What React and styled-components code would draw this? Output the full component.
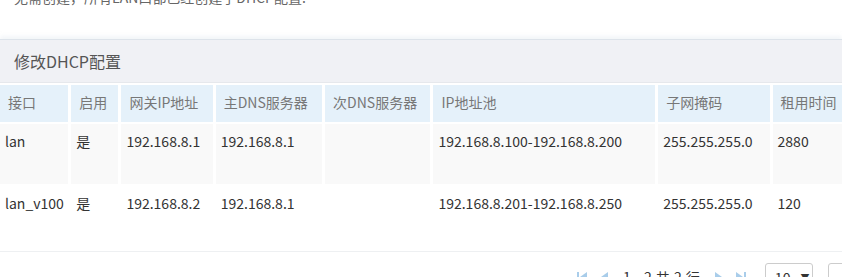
import React from 'react';
import styled, { createGlobalStyle } from 'styled-components';

const GlobalStyle = createGlobalStyle`
  body {
    margin: 0;
    background: #fff;
    overflow: hidden;
    font-family: "Noto Sans CJK SC", "Noto Sans", sans-serif;
  }
`;

const columns = [
    { key: 'iface', title: '接口', width: 68 },
    { key: 'enabled', title: '启用', width: 47 },
    { key: 'gateway', title: '网关IP地址', width: 91 },
    { key: 'dns1', title: '主DNS服务器', width: 106 },
    { key: 'dns2', title: '次DNS服务器', width: 105 },
    { key: 'pool', title: 'IP地址池', width: 221 },
    { key: 'mask', title: '子网掩码', width: 111 },
    { key: 'lease', title: '租用时间', width: 100 },
];

const rows = [
    { iface: 'lan', enabled: '是', gateway: '192.168.8.1', dns1: '192.168.8.1', dns2: '', pool: '192.168.8.100-192.168.8.200', mask: '255.255.255.0', lease: '2880' },
    { iface: 'lan_v100', enabled: '是', gateway: '192.168.8.2', dns1: '192.168.8.1', dns2: '', pool: '192.168.8.201-192.168.8.250', mask: '255.255.255.0', lease: '120' },
];

function PageIcon({ dir, bar }) {
    const left = dir === 'left';
    return (
        <Icon width="12" height="14" viewBox="0 0 12 14">
            {left ? (
                <>
                    {bar && <rect x="0" y="2" width="2" height="10" />}
                    <polygon points={bar ? '10,2 3,7 10,12' : '9,2 2,7 9,12'} />
                </>
            ) : (
                <>
                    <polygon points={bar ? '2,2 9,7 2,12' : '3,2 10,7 3,12'} />
                    {bar && <rect x="10" y="2" width="2" height="10" />}
                </>
            )}
        </Icon>
    );
}

function App() {
    return (
        <Page>
            <GlobalStyle />
            <Notice>无需创建，所有LAN口都已经创建了DHCP配置.</Notice>
            <Panel>
                <PanelHeader>修改DHCP配置</PanelHeader>
                <Table>
                    <colgroup>
                        {columns.map(c => <col key={c.key} style={{ width: c.width }} />)}
                    </colgroup>
                    <thead>
                        <tr>
                            {columns.map(c => <Th key={c.key}>{c.title}</Th>)}
                        </tr>
                    </thead>
                    <tbody>
                        {rows.map((r, i) => (
                            <Tr key={r.iface} $striped={i % 2 === 0} $height={i === 0 ? 60 : 63}>
                                {columns.map(c => <Td key={c.key}>{r[c.key]}</Td>)}
                            </Tr>
                        ))}
                    </tbody>
                </Table>
                <Footer>
                    <Pager>
                        <PageIcon dir="left" bar />
                        <PageIcon dir="left" />
                        <PageInfo>1 - 2 共 2 行</PageInfo>
                        <PageIcon dir="right" />
                        <PageIcon dir="right" bar />
                    </Pager>
                    <SelectBox>10 <Caret>▼</Caret></SelectBox>
                    <SelectBox $wide />
                </Footer>
            </Panel>
        </Page>
    );
}

export default App;

const Page = styled.div`
    width: 842px;
    height: 277px;
    overflow: hidden;
`;

const Notice = styled.div`
    margin-top: -13px;
    padding-left: 14px;
    height: 20px;
    line-height: 20px;
    font-size: 14px;
    color: #666;
    white-space: nowrap;
`;

const Panel = styled.div`
    margin-top: 32px;
    border-top: 1px solid #dde3ea;
    box-shadow: 0 -3px 4px rgba(220, 228, 238, 0.35);
`;

const PanelHeader = styled.div`
    height: 42px;
    display: flex;
    align-items: center;
    padding-left: 14px;
    background: #f0f1f5;
    border-bottom: 1px solid #e6e8ec;
    font-size: 16px;
    color: #555;
`;

const Table = styled.table`
    table-layout: fixed;
    border-collapse: separate;
    border-spacing: 3px 2px;
    margin-left: -3px;
    width: 879px;
    font-size: 14px;
`;

const Th = styled.th`
    box-sizing: border-box;
    height: 37px;
    padding: 0 0 3px 8px;
    background: #e5f1fa;
    color: #777;
    font-weight: normal;
    text-align: left;
    white-space: nowrap;
    overflow: hidden;
`;

const Tr = styled.tr`
    height: ${p => p.$height}px;
    td {
        background: ${p => (p.$striped ? '#f9f9f9' : '#fff')};
    }
`;

const Td = styled.td`
    padding: 7px 0 0 5px;
    vertical-align: top;
    color: #333;
    white-space: nowrap;
    overflow: hidden;
    line-height: 20px;
`;

const Footer = styled.div`
    display: flex;
    align-items: center;
    gap: 15px;
    padding: 11px 0 0 577px;
    border-top: 1px solid #eef0f2;
    white-space: nowrap;
`;

const Pager = styled.div`
    flex: none;
    display: flex;
    align-items: center;
    gap: 10px;
    margin-right: 4px;
`;

const Icon = styled.svg`
    fill: #a9cdea;
    flex: none;
`;

const PageInfo = styled.span`
    font-size: 14px;
    color: #333;
    padding: 0 2px;
    word-spacing: 1px;
    white-space: nowrap;
`;

const SelectBox = styled.div`
    flex: none;
    width: ${p => (p.$wide ? 60 : 48)}px;
    height: 28px;
    box-sizing: border-box;
    border: 1px solid #ccc;
    border-radius: 3px;
    padding-left: 9px;
    display: flex;
    align-items: center;
    font-size: 14px;
    color: #333;
`;

const Caret = styled.span`
    font-size: 9px;
    margin-left: 10px;
    color: #333;
`;
